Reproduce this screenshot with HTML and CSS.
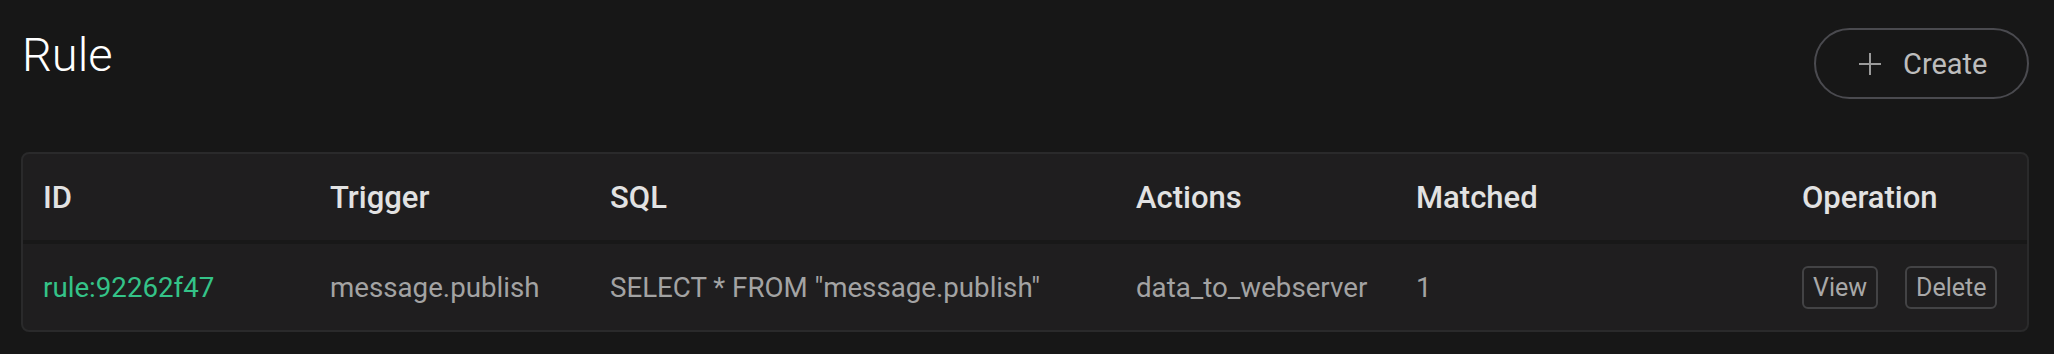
FILE: index.html
```html
<!DOCTYPE html>
<html lang="en">
<head>
    <meta charset="UTF-8">
    <meta name="viewport" content="width=device-width, initial-scale=1.0">
    <title>Rule</title>
    <link rel="stylesheet" href="styles.css">
</head>
<body>
    <div class="page-header">
        <div class="page-title">Rule</div>
        <button class="create-btn">
            <svg class="plus-icon" viewBox="0 0 24 24" width="24" height="24">
                <path d="M12 1v22M1 12h22" stroke="currentColor" stroke-width="2" fill="none"/>
            </svg>
            <span>Create</span>
        </button>
    </div>

    <div class="card">
        <table class="rule-table">
            <colgroup>
                <col class="col-id">
                <col class="col-trigger">
                <col class="col-sql">
                <col class="col-actions">
                <col class="col-matched">
                <col class="col-operation">
            </colgroup>
            <thead>
                <tr>
                    <th>ID</th>
                    <th>Trigger</th>
                    <th>SQL</th>
                    <th>Actions</th>
                    <th>Matched</th>
                    <th>Operation</th>
                </tr>
            </thead>
            <tbody>
                <tr>
                    <td class="rule-id">rule:92262f47</td>
                    <td>message.publish</td>
                    <td>SELECT * FROM "message.publish"</td>
                    <td>data_to_webserver</td>
                    <td>1</td>
                    <td class="ops">
                        <button class="op-btn">View</button>
                        <button class="op-btn">Delete</button>
                    </td>
                </tr>
            </tbody>
        </table>
    </div>
</body>
</html>
```

FILE: styles.css
```css
body {
    font-family: Roboto, "Noto Sans", Arial, sans-serif;
    background-color: #171717;
    margin: 0;
    padding: 28px 25px 0 21px;
}

.page-header {
    display: flex;
    justify-content: space-between;
    align-items: flex-start;
}

.page-title {
    font-size: 47px;
    line-height: 48px;
    font-weight: 300;
    color: #ffffff;
    margin-top: 3px;
    margin-left: 1px;
}

.create-btn {
    display: flex;
    align-items: center;
    gap: 21px;
    height: 71px;
    width: 215px;
    padding: 0 0 0 42px;
    border: 2px solid #4a4a4f;
    border-radius: 36px;
    background-color: transparent;
    color: #bdbdbd;
    font-family: inherit;
    font-size: 29px;
    cursor: pointer;
}

.plus-icon {
    color: #9a9a9a;
}

.card {
    margin-top: 53px;
    border: 2px solid #2a2a2b;
    border-radius: 8px;
    background-color: #1f1e1f;
    overflow: hidden;
}

.rule-table {
    width: 100%;
    border-collapse: collapse;
    table-layout: fixed;
}

.col-id { width: 287px; }
.col-trigger { width: 280px; }
.col-sql { width: 526px; }
.col-actions { width: 280px; }
.col-matched { width: 386px; }

.rule-table th {
    height: 86px;
    padding: 0 20px;
    text-align: left;
    font-size: 31px;
    font-weight: 500;
    color: #e2e2e2;
    border-bottom: 4px solid #181818;
}

.rule-table td {
    height: 86px;
    padding: 0 20px;
    font-size: 27.7px;
    color: #a3a3a3;
    white-space: nowrap;
}

.rule-table .rule-id {
    color: #34c388;
}

.ops {
    display: flex;
    align-items: center;
    gap: 27px;
}

.op-btn {
    height: 43px;
    padding: 0 9px;
    border: 2px solid #434345;
    border-radius: 6px;
    background-color: transparent;
    color: #a8a8a8;
    font-family: inherit;
    font-size: 25px;
    cursor: pointer;
}
```
